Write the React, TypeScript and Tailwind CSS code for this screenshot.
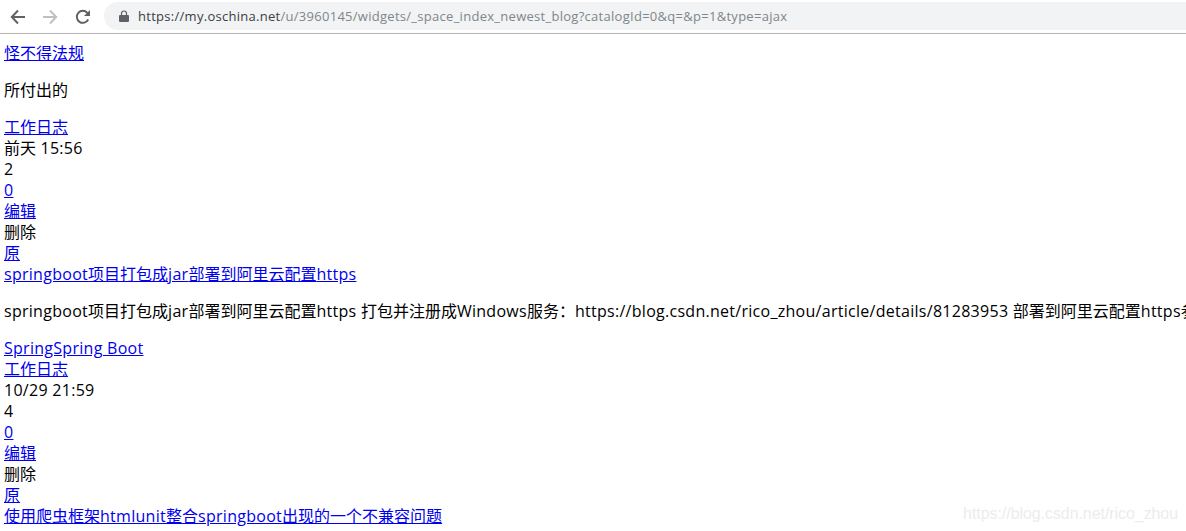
import React from 'react'

const linkCls = 'text-[#0000ee] underline'

// latin runs render a bit wider in the reference than the cjk ones
function Txt({ value }: { value: string }) {
  const parts = value.split(/([\x00-\x7f]+)/).filter(Boolean)
  return (
    <>
      {parts.map((p, i) =>
        /^[\x00-\x7f]/.test(p) ? <span key={i} className="tracking-[0.28px]">{p}</span> : <span key={i}>{p}</span>
      )}
    </>
  )
}

function Row({ href, text }: { href?: boolean; text: string }) {
  return (
    <div className="h-[21px] whitespace-nowrap">
      {href ? <a href="#" className={linkCls}><Txt value={text} /></a> : <Txt value={text} />}
    </div>
  )
}

function Para({ text }: { text: string }) {
  return <p className="my-4 h-[21px] whitespace-nowrap"><Txt value={text} /></p>
}

function Toolbar() {
  return (
    <div className="h-[34px] flex items-center bg-white border-b border-[#b4b4b4] shrink-0">
      <div className="flex items-center w-[104px] shrink-0">
        {/* back */}
        <svg width="16" height="16" viewBox="0 0 16 16" className="ml-[10px]" fill="none" stroke="#5f6368" strokeWidth="2">
          <path d="M15 8H2M8 1.5 1.8 8 8 14.5" />
        </svg>
        {/* forward */}
        <svg width="16" height="16" viewBox="0 0 16 16" className="ml-[16px]" fill="none" stroke="#bdc1c6" strokeWidth="2">
          <path d="M1 8h13M8 1.5 14.2 8 8 14.5" />
        </svg>
        {/* reload */}
        <svg width="16" height="16" viewBox="0 0 16 16" className="ml-[17px]" fill="none">
          <path d="M13.2 10.5A6 6 0 1 1 12.3 3.8L14 5.5" stroke="#5f6368" strokeWidth="2" />
          <path d="M15 1v6H9z" fill="#5f6368" />
        </svg>
      </div>
      <div className="w-[1082px] h-7 -mt-[1px] rounded-l-full bg-[#f1f3f4] flex items-center pl-[14px] font-['Open_Sans','Noto_Sans',sans-serif] text-[13px] leading-none">
        <svg width="12" height="12" viewBox="0 0 12 12" className="shrink-0" fill="#5f6368">
          <path d="M2 5h8a1 1 0 0 1 1 1v5a1 1 0 0 1-1 1H2a1 1 0 0 1-1-1V6a1 1 0 0 1 1-1z" />
          <path d="M3.5 5V3.5a2.5 2.5 0 0 1 5 0V5" fill="none" stroke="#5f6368" strokeWidth="1.2" />
        </svg>
        <span className="ml-2 whitespace-nowrap text-[#80868b] tracking-[0.28px]">
          <span className="text-[#3c4043]">https://my.oschina.net</span>/u/3960145/widgets/_space_index_newest_blog?catalogId=0&amp;q=&amp;p=1&amp;type=ajax
        </span>
      </div>
    </div>
  )
}

function Meta({ time, views }: { time: string; views: string }) {
  return (
    <>
      <Row href text="工作日志" />
      <Row text={time} />
      <Row text={views} />
      <Row href text="0" />
      <Row href text="编辑" />
      <Row text="删除" />
      <Row href text="原" />
    </>
  )
}

export default function App() {
  return (
    <div className="relative w-[1186px] h-[531px] overflow-hidden bg-white flex flex-col">
      <Toolbar />
      <div className="pl-1 pt-[9px] text-black text-base leading-[21px] font-['Open_Sans','Noto_Sans_CJK_SC',sans-serif]">
        <Row href text="怪不得法规" />
        <Para text="所付出的" />
        <Meta time="前天 15:56" views="2" />
        <Row href text="springboot项目打包成jar部署到阿里云配置https" />
        <Para text="springboot项目打包成jar部署到阿里云配置https 打包并注册成Windows服务：https://blog.csdn.net/rico_zhou/article/details/81283953 部署到阿里云配置https参考" />
        <Row href text="SpringSpring Boot" />
        <Meta time="10/29 21:59" views="4" />
        <Row href text="使用爬虫框架htmlunit整合springboot出现的一个不兼容问题" />
      </div>
      {/* csdn watermark */}
      <div className="absolute right-[8px] bottom-[7px] text-[15.85px] leading-5 text-[#ececec] font-['Liberation_Sans',sans-serif]">
        https://blog.csdn.net/rico_zhou
      </div>
    </div>
  )
}
